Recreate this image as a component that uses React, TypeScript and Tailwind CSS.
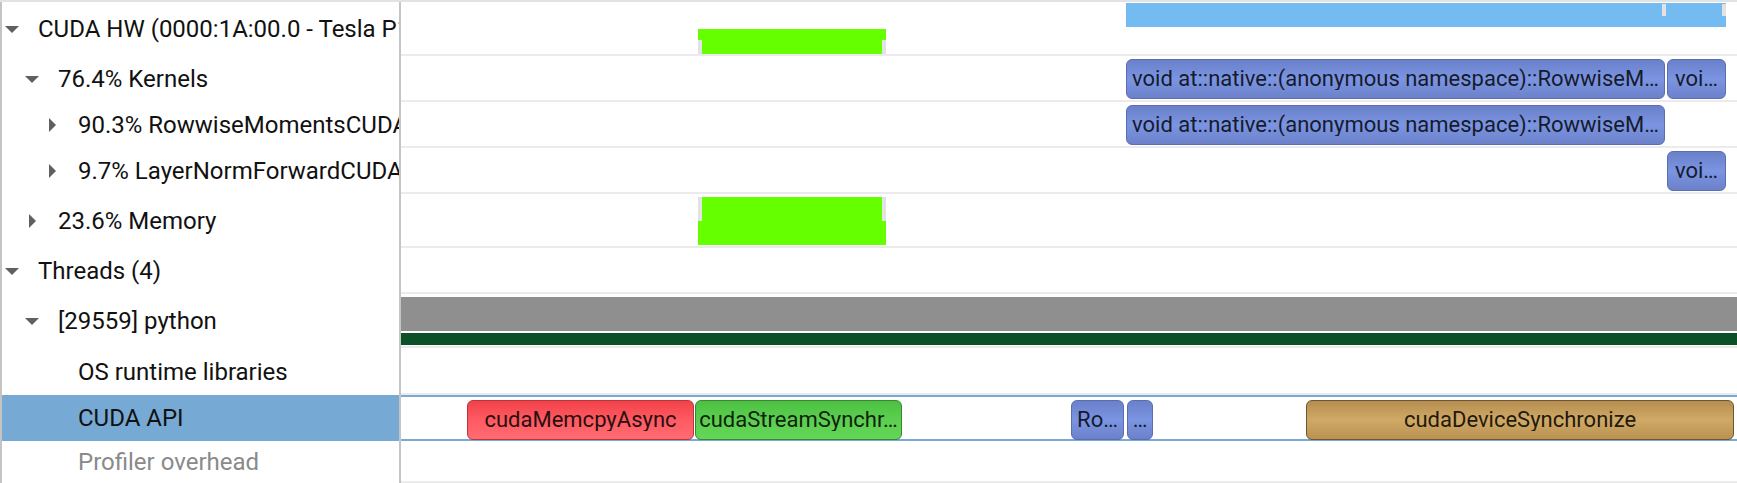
import React from 'react';

type Kind = 'kernel' | 'memcpy' | 'stream' | 'device';

type Box = { x: number; w: number; label: string; kind: Kind };

type Row = {
  label: string;
  level: 0 | 1 | 2;
  toggle?: 'open' | 'closed';
  height: number;
  muted?: boolean;
  selected?: boolean;
  boxes?: Box[];
  track?: 'hw' | 'memory' | 'thread';
};

const rows: Row[] = [
  { label: 'CUDA HW (0000:1A:00.0 - Tesla P100-PCIE-16GB)', level: 0, toggle: 'open', height: 54, track: 'hw' },
  {
    label: '76.4% Kernels',
    level: 1,
    toggle: 'open',
    height: 46,
    boxes: [
      { x: 725, w: 539, label: 'void at::native::(anonymous namespace)::RowwiseM…', kind: 'kernel' },
      { x: 1266, w: 59, label: 'voi…', kind: 'kernel' },
    ],
  },
  {
    label: '90.3% RowwiseMomentsCUDAKernel',
    level: 2,
    toggle: 'closed',
    height: 46,
    boxes: [{ x: 725, w: 539, label: 'void at::native::(anonymous namespace)::RowwiseM…', kind: 'kernel' }],
  },
  {
    label: '9.7% LayerNormForwardCUDAKernel',
    level: 2,
    toggle: 'closed',
    height: 46,
    boxes: [{ x: 1266, w: 59, label: 'voi…', kind: 'kernel' }],
  },
  { label: '23.6% Memory', level: 1, toggle: 'closed', height: 54, track: 'memory' },
  { label: 'Threads (4)', level: 0, toggle: 'open', height: 46 },
  { label: '[29559] python', level: 1, toggle: 'open', height: 54, track: 'thread' },
  { label: 'OS runtime libraries', level: 2, height: 47 },
  {
    label: 'CUDA API',
    level: 2,
    height: 46,
    selected: true,
    boxes: [
      { x: 66, w: 227, label: 'cudaMemcpyAsync', kind: 'memcpy' },
      { x: 294, w: 207, label: 'cudaStreamSynchr…', kind: 'stream' },
      { x: 670, w: 53, label: 'Ro…', kind: 'kernel' },
      { x: 726, w: 26, label: '…', kind: 'kernel' },
      { x: 905, w: 428, label: 'cudaDeviceSynchronize', kind: 'device' },
    ],
  },
  { label: 'Profiler overhead', level: 2, height: 42, muted: true },
];

const indent = { 0: 'pl-0', 1: 'pl-5', 2: 'pl-10' };

const boxStyle: Record<Kind, string> = {
  kernel: 'bg-linear-to-b from-[#6a80c9] via-[#7b95e3] to-[#6c81c9] border-[#5a6db0] text-[#161b2c]',
  memcpy: 'bg-linear-to-b from-[#f2414a] via-[#ff5a62] to-[#ff6b72] border-[#b8353c] text-[#2a0f10]',
  stream: 'bg-linear-to-b from-[#4cc141] via-[#5ccf50] to-[#63d558] border-[#3a8532] text-[#0f230d]',
  device: 'bg-linear-to-b from-[#b58d4e] via-[#d1a967] to-[#b99150] border-[#6f5531] text-[#221a0c]',
};

function Caret({ dir }: { dir: 'open' | 'closed' }) {
  return dir === 'open' ? (
    <svg width="14" height="7" viewBox="0 0 14 7">
      <polygon points="0,0 14,0 7,7" fill="#606060" />
    </svg>
  ) : (
    <svg width="7" height="14" viewBox="0 0 7 14">
      <polygon points="0,0 7,7 0,14" fill="#606060" />
    </svg>
  );
}

function Slice({ box }: { box: Box }) {
  return (
    <div
      className={`absolute top-[3px] h-[40px] rounded-[6px] border-[1.5px] px-[2px] flex items-center ${boxStyle[box.kind]}`}
      style={{ left: box.x, width: box.w }}
    >
      <span className="w-full truncate text-center text-[22px] leading-none">{box.label}</span>
    </div>
  );
}

function Track({ row }: { row: Row }) {
  if (row.track === 'thread') {
    return (
      <div className="flex flex-col gap-[2px] pt-[3px]">
        <div className="h-[34px] bg-[#8f8f8f]" />
        <div className="h-[12px] bg-[#0b5027]" />
      </div>
    );
  }
  if (row.track === 'hw') {
    return (
      <>
        <div className="absolute left-[725px] top-[1px] h-[24px] w-[600px] bg-[#74bbf2]" />
        <div className="absolute left-[1261px] top-[2px] h-[12px] w-[4px] bg-[#e2e2e2]" />
        <div className="absolute left-[1321px] top-[2px] h-[12px] w-[4px] bg-[#e2e2e2]" />
        <div className="absolute left-[297px] top-[27px] h-[11px] w-[188px] bg-[#66ff00]" />
        <div className="absolute left-[297px] top-[38px] h-[14px] w-[188px] bg-[#e3e3e3]" />
        <div className="absolute left-[301px] top-[38px] h-[14px] w-[180px] bg-[#66ff00]" />
      </>
    );
  }
  if (row.track === 'memory') {
    return (
      <>
        <div className="absolute left-[297px] top-[3px] h-[24px] w-[188px] bg-[#e3e3e3]" />
        <div className="absolute left-[301px] top-[3px] h-[24px] w-[180px] bg-[#66ff00]" />
        <div className="absolute left-[297px] top-[27px] h-[24px] w-[188px] bg-[#66ff00]" />
      </>
    );
  }
  return <>{row.boxes?.map((b, i) => <Slice key={i} box={b} />)}</>;
}

export default function App() {
  return (
    <div
      className="w-[1737px] h-[483px] overflow-hidden bg-white border-t-2 border-[#e2e2e2] flex flex-col"
      style={{ fontFamily: 'Roboto, "Noto Sans", sans-serif' }}
    >
      {rows.map((row, i) => (
        <div key={i} className="flex shrink-0" style={{ height: row.height }}>
          {/* LABEL COLUMN */}
          <div className="w-[399px] shrink-0 border-l-2 border-[#c4c4c4] flex">
            <div
              className={`flex-1 flex items-center overflow-hidden ${indent[row.level]} ${
                row.selected ? 'bg-[#77a9d5]' : ''
              }`}
            >
              <div className="w-[20px] shrink-0 flex justify-center">
                {row.toggle && <Caret dir={row.toggle} />}
              </div>
              <span
                className={`ml-[16px] whitespace-nowrap text-[24px] leading-none ${
                  row.muted ? 'text-[#8a8a8a]' : 'text-[#111111]'
                }`}
              >
                {row.label}
              </span>
            </div>
          </div>

          {/* TIMELINE COLUMN */}
          <div className="flex-1 border-l-2 border-[#c4c4c4] flex flex-col">
            <div
              className={`relative flex-1 ${
                row.selected ? 'border-y-2 border-[#78aad6]' : 'border-b-2 border-[#ebebeb]'
              } ${i === rows.length - 1 ? 'border-b-0' : ''}`}
            >
              <Track row={row} />
            </div>
          </div>
        </div>
      ))}
    </div>
  );
}
